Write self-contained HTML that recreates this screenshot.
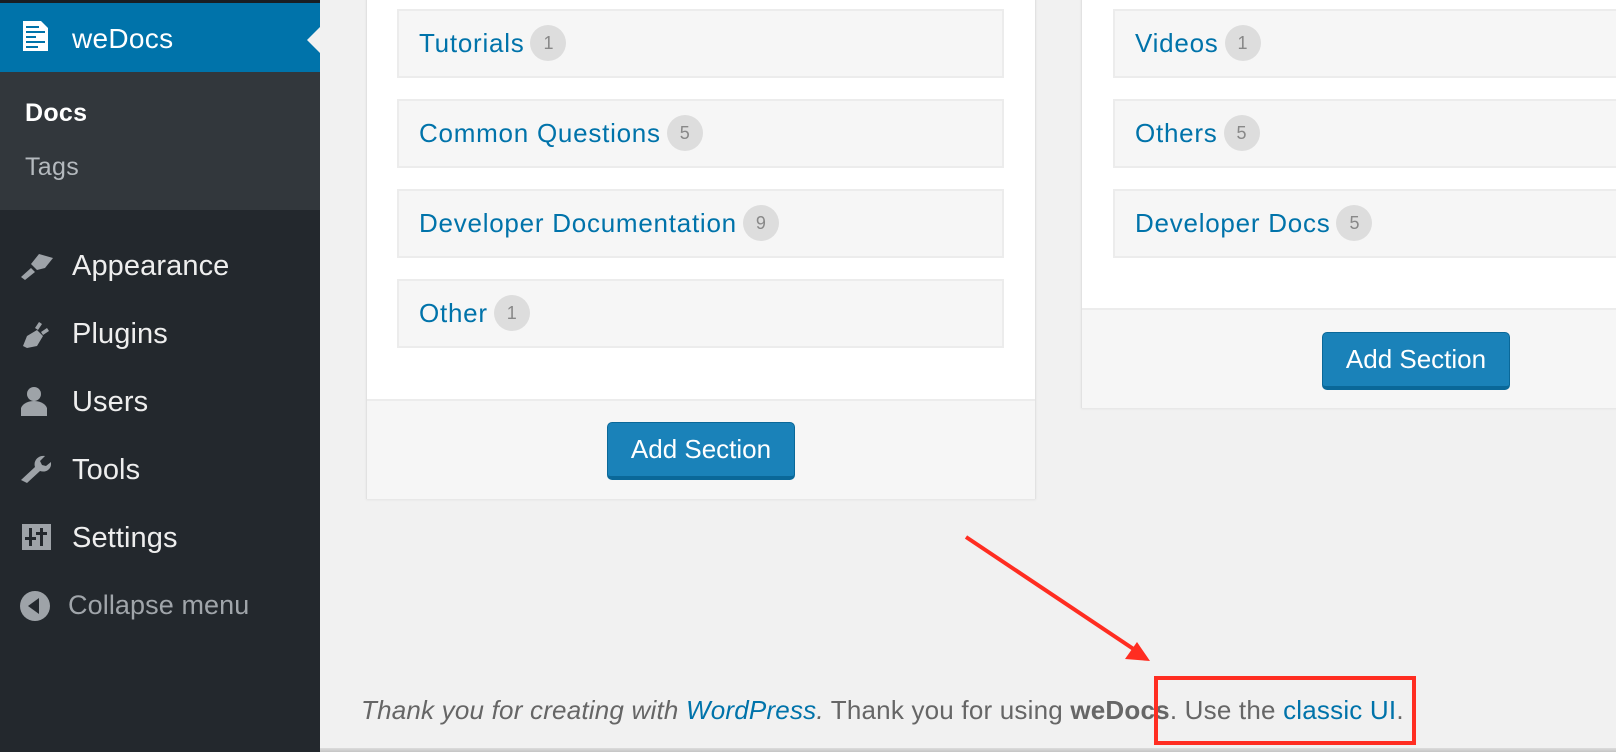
<!DOCTYPE html>
<html><head><meta charset="utf-8"><style>
*{box-sizing:border-box;margin:0;padding:0}
body{width:1616px;height:752px;overflow:hidden;background:#f1f1f1;font-family:"Liberation Sans",sans-serif;position:relative}
.sb{position:absolute;left:0;top:0;width:320px;height:752px;background:#23282d}
.top{position:absolute;left:0;top:0;width:320px;height:3px;background:#191e23}
.act{position:absolute;left:0;top:3px;width:320px;height:69px;background:#0073aa}
.act span{position:absolute;left:72px;top:20px;color:#fff;font-size:28px;letter-spacing:.3px}
.tri{position:absolute;right:0;top:24px;width:0;height:0;border-top:13px solid transparent;border-bottom:13px solid transparent;border-right:13px solid #f1f1f1}
.sub{position:absolute;left:0;top:72px;width:320px;height:138px;background:#32373c}
.sub div{position:absolute;left:25px;font-size:25px;letter-spacing:.3px}
.mi{position:absolute;left:72px;color:#eee;font-size:29px;letter-spacing:.1px}
.ic{position:absolute;left:19px}
.panel{position:absolute;background:#fff;border:1px solid #e2e2e2;box-shadow:0 1px 2px rgba(0,0,0,.06)}
.item{position:absolute;height:69px;background:#f6f6f6;border:2px solid #ececec}
.item span{position:absolute;left:20px;top:16px;color:#0073aa;font-size:26px;letter-spacing:.75px;white-space:nowrap}
.b{display:inline-block;width:36px;height:36px;border-radius:50%;background:#ddd;color:#888;font-size:18px;text-align:center;line-height:36px;margin-left:6px;vertical-align:middle;position:relative;top:-2px;font-style:normal;letter-spacing:0}
.foot{position:absolute;left:0;right:0;background:#f6f6f6;border-top:2px solid #ececec}
.btn{position:absolute;width:188px;height:58px;background:#1a82b9;border:1px solid #0a6899;border-bottom:4px solid #0a6899;border-radius:5px;color:#fff;font-size:26px;text-align:center;line-height:52px}
</style></head><body>
<div class="sb">
<div class="top"></div>
<div class="act">
<svg style="position:absolute;left:23px;top:18px" width="26" height="30" viewBox="0 0 26 30"><path d="M0 0h18l7 7v23H0z" fill="#fff"/><g fill="#0073aa"><rect x="3" y="5" width="13" height="2"/><rect x="3" y="10" width="19" height="2"/><rect x="3" y="15" width="10" height="2"/><rect x="3" y="20" width="19" height="2"/><rect x="3" y="25" width="12" height="2"/></g></svg>
<span>weDocs</span><div class="tri"></div></div>
<div class="sub"><div style="top:27px;color:#fff;font-weight:bold">Docs</div><div style="top:81px;color:#b4b9be">Tags</div></div>
<svg class="ic" style="top:252px" width="36" height="28" viewBox="0 0 36 28"><path d="M2 25l10-9 4 4-10 8zM12 12l8-10 14 4-8 10-8 2z" fill="#9ea3a8"/></svg>
<div class="mi" style="top:250px">Appearance</div>
<svg class="ic" style="top:320px" width="32" height="28" viewBox="0 0 32 28"><path d="M4 26l4-10 10-6 6 6-6 10-10 2zM20 2l-4 6 3 2 4-6zM28 8l-6 4 2 3 6-4z" fill="#9ea3a8"/></svg>
<div class="mi" style="top:318px">Plugins</div>
<svg class="ic" style="top:386px" width="32" height="30" viewBox="0 0 32 30"><circle cx="15" cy="8" r="7" fill="#9ea3a8"/><path d="M2 30v-8c2-5 8-7 13-7s11 2 13 7v8z" fill="#9ea3a8"/></svg>
<div class="mi" style="top:386px">Users</div>
<svg class="ic" style="top:454px" width="32" height="30" viewBox="0 0 32 30"><path d="M2 26l14-13c-2-6 3-12 10-11l-5 5 2 4 4 1 5-4c1 7-5 11-11 9L8 29z" fill="#9ea3a8"/></svg>
<div class="mi" style="top:454px">Tools</div>
<svg class="ic" style="top:524px" width="32" height="30" viewBox="0 0 32 30"><rect x="3" y="0" width="29" height="26" fill="#9ea3a8"/><g fill="#23282d"><rect x="10" y="4" width="3" height="18"/><rect x="6" y="13" width="11" height="3"/><rect x="21" y="4" width="3" height="18"/><rect x="17" y="8" width="11" height="3"/></g></svg>
<div class="mi" style="top:522px">Settings</div>
<svg class="ic" style="top:590px" width="32" height="32" viewBox="0 0 32 32"><circle cx="16" cy="16" r="15" fill="#9ea3a8"/><path d="M20 8v16L9 16z" fill="#23282d"/></svg>
<div class="mi" style="top:590px;left:68px;color:#a0a5aa;font-size:27px">Collapse menu</div>
</div>

<div class="panel" style="left:366px;top:-5px;width:670px;height:504px">
<div class="item" style="left:30px;top:13px;width:607px"><span>Tutorials<i class="b">1</i></span></div>
<div class="item" style="left:30px;top:103px;width:607px"><span>Common Questions<i class="b">5</i></span></div>
<div class="item" style="left:30px;top:193px;width:607px"><span>Developer Documentation<i class="b">9</i></span></div>
<div class="item" style="left:30px;top:283px;width:607px"><span>Other<i class="b">1</i></span></div>
<div class="foot" style="top:403px;height:100px"><div class="btn" style="left:240px;top:21px">Add Section</div></div>
</div>

<div class="panel" style="left:1081px;top:-5px;width:600px;height:413px">
<div class="item" style="left:31px;top:13px;width:600px"><span>Videos<i class="b">1</i></span></div>
<div class="item" style="left:31px;top:103px;width:600px"><span>Others<i class="b">5</i></span></div>
<div class="item" style="left:31px;top:193px;width:600px"><span>Developer Docs<i class="b">5</i></span></div>
<div class="foot" style="top:312px;height:100px"><div class="btn" style="left:240px;top:22px">Add Section</div></div>
</div>

<div style="position:absolute;left:361px;top:695px;font-size:26px;letter-spacing:.2px;color:#666;white-space:nowrap"><i>Thank you for creating with <span style="color:#0073aa">WordPress</span>.</i> Thank you for using <b>weDocs</b>. Use the <span style="color:#0073aa">classic UI</span>.</div>
<div style="position:absolute;left:1154px;top:676px;width:262px;height:69px;border:4px solid #ff2d21"></div>
<svg style="position:absolute;left:0;top:0" width="1616" height="752"><line x1="966" y1="537" x2="1135" y2="650" stroke="#ff2d21" stroke-width="4"/><path d="M1150 661l-25-2 12-17z" fill="#ff2d21"/></svg>
<div style="position:absolute;left:320px;top:748px;width:1296px;height:4px;background:linear-gradient(#dcdcdc,#c4c4c4)"></div>
</body></html>
